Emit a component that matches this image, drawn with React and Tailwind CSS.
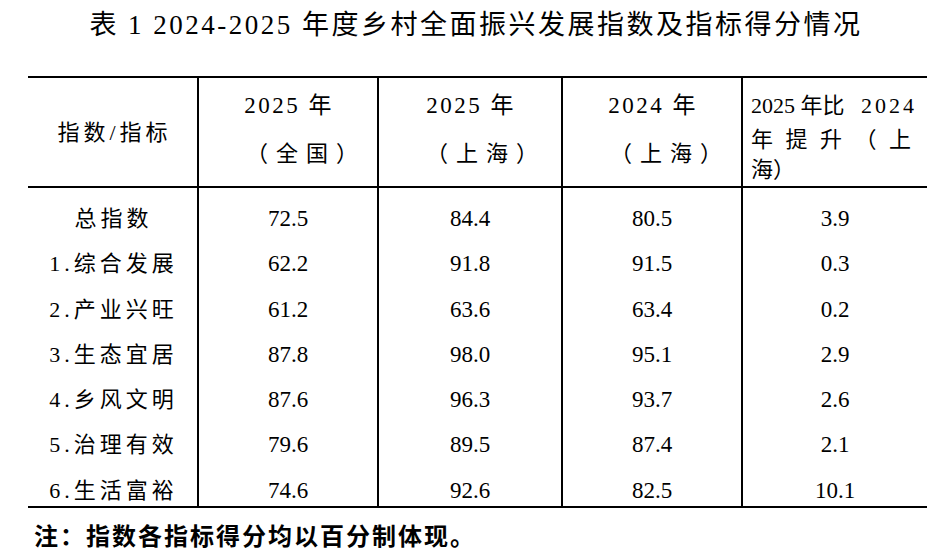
import React from 'react';

const rows = [
    { name: '总指数', values: ['72.5', '84.4', '80.5', '3.9'] },
    { name: '1.综合发展', values: ['62.2', '91.8', '91.5', '0.3'] },
    { name: '2.产业兴旺', values: ['61.2', '63.6', '63.4', '0.2'] },
    { name: '3.生态宜居', values: ['87.8', '98.0', '95.1', '2.9'] },
    { name: '4.乡风文明', values: ['87.6', '96.3', '93.7', '2.6'] },
    { name: '5.治理有效', values: ['79.6', '89.5', '87.4', '2.1'] },
    { name: '6.生活富裕', values: ['74.6', '92.6', '82.5', '10.1'] },
];

const headers = [
    { year: '2025 年', area: '（全国）' },
    { year: '2025 年', area: '（上海）' },
    { year: '2024 年', area: '（上海）' },
];

const grid = 'grid grid-cols-[169px_180px_184px_180px_186px]';

export default function App() {
    return (
        <div className="w-[944px] h-[556px] bg-white text-black font-[Liberation_Serif,Noto_Sans_CJK_SC,serif] overflow-hidden">
            {/* Title */}
            <div className="pt-[8px] h-[42px] text-center text-[27px] leading-[34px] tracking-[2.5px] pl-[8px] whitespace-nowrap">
                表 1 2024-2025 年度乡村全面振兴发展指数及指标得分情况
            </div>

            {/* Table */}
            <div className="mt-[34px] ml-[28px] w-[899px] border-t-2 border-b-2 border-black">
                {/* Header */}
                <div className={`${grid} h-[110px] border-b-2 border-black`}>
                    <div className="flex items-center justify-center text-[22px] tracking-[4px] pl-[4px]">
                        指数/指标
                    </div>
                    {headers.map((h, i) => (
                        <div key={i} className="border-l-2 border-black">
                            <div className="mt-[13px] text-center text-[23px] leading-[30px] tracking-[2.5px] pl-[2px]">
                                {h.year}
                            </div>
                            <div className="mt-[18px] pl-[47px] text-[22px] leading-[30px] tracking-[8px] whitespace-nowrap">
                                {h.area}
                            </div>
                        </div>
                    ))}
                    <div className="border-l-2 border-black pl-[8px] text-[22px] leading-[30px]">
                        <div className="mt-[13px] w-[166px] flex justify-between whitespace-nowrap">
                            <span>2025 年比</span>
                            <span className="tracking-[3px]">2024</span>
                        </div>
                        <div className="mt-[4px] w-[160px] flex justify-between">
                            <span>年</span>
                            <span>提</span>
                            <span>升</span>
                            <span>（</span>
                            <span>上</span>
                        </div>
                        <div>海）</div>
                    </div>
                </div>

                {/* Body */}
                <div className={grid}>
                    <div className="pt-[8px]">
                        {rows.map((r, i) => (
                            <div
                                key={i}
                                className={`${i === rows.length - 1 ? 'h-[38px]' : 'h-[45.25px]'} text-center text-[22px] leading-[45.25px] tracking-[4px] pl-[2px] whitespace-nowrap`}
                            >
                                {r.name}
                            </div>
                        ))}
                    </div>
                    {[0, 1, 2, 3].map((c) => (
                        <div key={c} className="border-l-2 border-black pt-[8px]">
                            {rows.map((r, i) => (
                                <div
                                    key={i}
                                    className={`${i === rows.length - 1 ? 'h-[38px]' : 'h-[45.25px]'} text-center text-[23px] leading-[45.25px]`}
                                >
                                    {r.values[c]}
                                </div>
                            ))}
                        </div>
                    ))}
                </div>
            </div>

            {/* Note */}
            <div className="pl-[34px] mt-[10px] text-[24px] leading-[34px] tracking-[2px] font-bold font-[Noto_Sans_CJK_SC,sans-serif]">
                注：指数各指标得分均以百分制体现。
            </div>
        </div>
    );
}
